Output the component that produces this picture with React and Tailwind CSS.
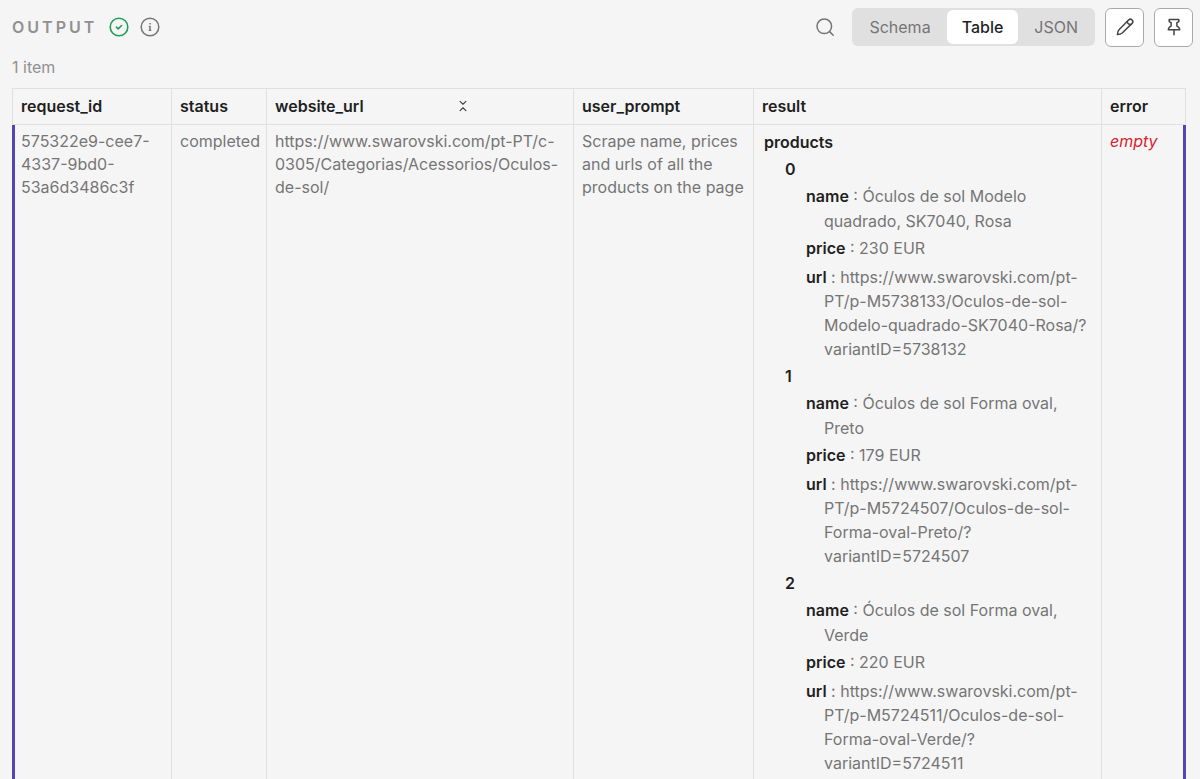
import { useState } from "react";
import { ChevronsDownUp } from "lucide-react";

const products = [
  {
    name: "Óculos de sol Modelo quadrado, SK7040, Rosa",
    price: "230 EUR",
    url: "https://www.swarovski.com/pt-PT/p-M5738133/Oculos-de-sol-Modelo-quadrado-SK7040-Rosa/?variantID=5738132",
  },
  {
    name: "Óculos de sol Forma oval, Preto",
    price: "179 EUR",
    url: "https://www.swarovski.com/pt-PT/p-M5724507/Oculos-de-sol-Forma-oval-Preto/?variantID=5724507",
  },
  {
    name: "Óculos de sol Forma oval, Verde",
    price: "220 EUR",
    url: "https://www.swarovski.com/pt-PT/p-M5724511/Oculos-de-sol-Forma-oval-Verde/?variantID=5724511",
  },
];

const columns = [
  { key: "request_id", width: "w-[160px]" },
  { key: "status", width: "w-[95px]" },
  { key: "website_url", width: "w-[307px]", collapsible: true },
  { key: "user_prompt", width: "w-[180px]" },
  { key: "result", width: "w-[348px]" },
  { key: "error", width: "w-[84px]" },
];

const views = ["Schema", "Table", "JSON"];

function SuccessIcon() {
  return (
    <svg viewBox="0 0 20 20" role="img" aria-label="Success" className="size-5 text-[#1f9d57]" fill="none" stroke="currentColor" strokeWidth="1.6" strokeLinecap="round" strokeLinejoin="round">
      <circle cx="10" cy="10" r="8.8" />
      <path d="m7.4 10.2 1.8 1.7 3.4-3.4" />
    </svg>
  );
}

function InfoIcon() {
  return (
    <svg viewBox="0 0 20 20" className="size-5" fill="none" stroke="currentColor" strokeWidth="1.5" strokeLinecap="round" strokeLinejoin="round">
      <circle cx="10" cy="10" r="8.8" />
      <path d="M9.4 9.6h.6v3.6M9.3 13.3h1.4" />
      <circle cx="10" cy="6.8" r="0.4" fill="currentColor" strokeWidth="0.8" />
    </svg>
  );
}

function SearchIcon() {
  return (
    <svg viewBox="0 0 20 20" className="size-5" fill="none" stroke="currentColor" strokeWidth="1.5" strokeLinecap="round">
      <circle cx="9.3" cy="9.3" r="7.3" />
      <path d="m14.6 14.6 3.6 3.6" />
    </svg>
  );
}

function PencilIcon() {
  return (
    <svg viewBox="0 0 20 20" className="size-5" fill="none" stroke="currentColor" strokeWidth="1.5" strokeLinejoin="round" strokeLinecap="round">
      <path d="M2.4 17.6c.1-1.9.5-3.6 1.6-4.8L13.6 3a2.4 2.4 0 0 1 3.5 3.4L7.2 16c-1.2 1-2.9 1.500-4.800 1.600Z" />
      <path d="M12.400 4.300c-.3 1.800 1 3.200 3.300 3.300" />
    </svg>
  );
}

function PinIcon() {
  return (
    <svg viewBox="0 0 20 20" className="size-5" fill="none" stroke="currentColor" strokeWidth="1.5" strokeLinejoin="round" strokeLinecap="round">
      <path d="M5.2 2.4h9.6v2.2l-1.9 1v3.5c1.7.7 2.7 1.7 2.8 3.7H4.3c.1-2 1.1-3 2.8-3.7V5.6l-1.9-1Z" />
      <path d="M10 12.8v5" />
    </svg>
  );
}

function Label({ children }) {
  return <span className="font-semibold text-[#1f1f1f]">{children}</span>;
}

function Product({ index, product }) {
  return (
    <div>
      <div className="mt-[3px] pl-[21px] leading-6">
        <Label>{index}</Label>
      </div>
      <div className="mt-[3px] pl-[60px] -indent-[18px] leading-[25px]">
        <Label>name</Label>
        {` : ${product.name}`}
      </div>
      <div className="mt-[2px] pl-[60px] -indent-[18px] leading-[25px]">
        <Label>price</Label>
        {` : ${product.price}`}
      </div>
      <div className="mt-1 pl-[60px] -indent-[18px] leading-6">
        <Label>url</Label>
        {` : ${product.url}`}
      </div>
    </div>
  );
}

function Toolbar({ view, onViewChange }) {
  return (
    <header className="flex h-[54px] items-center pr-[7px] pl-3">
      <h1 className="mr-3 text-base font-semibold tracking-[3px] text-[#909090]">OUTPUT</h1>
      <SuccessIcon />
      <button type="button" aria-label="Run info" className="ml-[11px] text-[#757575]">
        <InfoIcon />
      </button>

      <button type="button" aria-label="Search" className="mr-[17px] ml-auto text-[#757575]">
        <SearchIcon />
      </button>
      <div role="group" aria-label="View" className="mr-[10px] flex gap-px rounded-md bg-[#e0e0e0] p-[2px]">
        {views.map((name) => (
          <button
            key={name}
            type="button"
            aria-pressed={view === name}
            onClick={() => onViewChange(name)}
            className={`h-[34px] rounded-md px-[15px] text-base ${
              view === name ? "bg-white font-medium text-[#1f1f1f]" : "text-[#757575]"
            }`}
          >
            {name}
          </button>
        ))}
      </div>
      <div className="flex gap-[10px] text-[#444]">
        <button
          type="button"
          aria-label="Edit output"
          className="flex size-[39px] items-center justify-center rounded-md border border-[#aaa] bg-white"
        >
          <PencilIcon />
        </button>
        <button
          type="button"
          aria-label="Pin data"
          className="flex size-[39px] items-center justify-center rounded-md border border-[#aaa] bg-white"
        >
          <PinIcon />
        </button>
      </div>
    </header>
  );
}

export default function App() {
  const [view, setView] = useState("Table");

  return (
    <main className="h-screen overflow-hidden bg-[#f5f5f5] font-['Inter',sans-serif] text-base text-[#757575]">
      <Toolbar view={view} onViewChange={setView} />
      <p className="mb-[9px] pt-[1px] pl-3 leading-6 text-[#909090]">1 item</p>

      <div className="pr-[14px] pl-3">
        <table className="w-full table-fixed border-separate border-spacing-0 border-t border-[#e0e0e0] text-left">
          <thead>
            <tr>
              {columns.map((column) => (
                <th
                  key={column.key}
                  scope="col"
                  className={`${column.width} h-9 border-r border-b border-[#e0e0e0] px-2 pb-[2px] font-semibold text-[#1f1f1f] first:border-l`}
                >
                  {column.collapsible ? (
                    <div className="flex items-center justify-between pr-[95px]">
                      {column.key}
                      <button type="button" aria-label="Collapse column" className="text-[#444]">
                        <ChevronsDownUp className="size-[14px]" strokeWidth={2} />
                      </button>
                    </div>
                  ) : (
                    column.key
                  )}
                </th>
              ))}
            </tr>
          </thead>
          <tbody>
            <tr className="align-top leading-[23px]">
              <td className="border-r border-l-3 border-r-[#e0e0e0] border-l-[#5645b0] pt-[5px] pr-2 pl-[6px]">
                575322e9-cee7-4337-9bd0-53a6d3486c3f
              </td>
              <td className="border-r border-[#e0e0e0] pt-[5px] pl-2">completed</td>
              <td className="border-r border-[#e0e0e0] px-2 pt-[5px]">
                https://www.swarovski.com/pt-PT/c-0305/Categorias/Acessorios/Oculos-de-sol/
              </td>
              <td className="border-r border-[#e0e0e0] px-2 pt-[5px]">
                Scrape name, prices and urls of all the products on the page
              </td>
              <td className="border-r border-[#e0e0e0] pt-[5px] pr-2 pb-6 pl-[10px]">
                <div className="leading-6">
                  <Label>products</Label>
                </div>
                {products.map((product, index) => (
                  <Product key={product.url} index={index} product={product} />
                ))}
              </td>
              <td className="border-r-3 border-[#5645b0] px-2 pt-[5px] text-[#d4242f] italic">empty</td>
            </tr>
          </tbody>
        </table>
      </div>
    </main>
  );
}
